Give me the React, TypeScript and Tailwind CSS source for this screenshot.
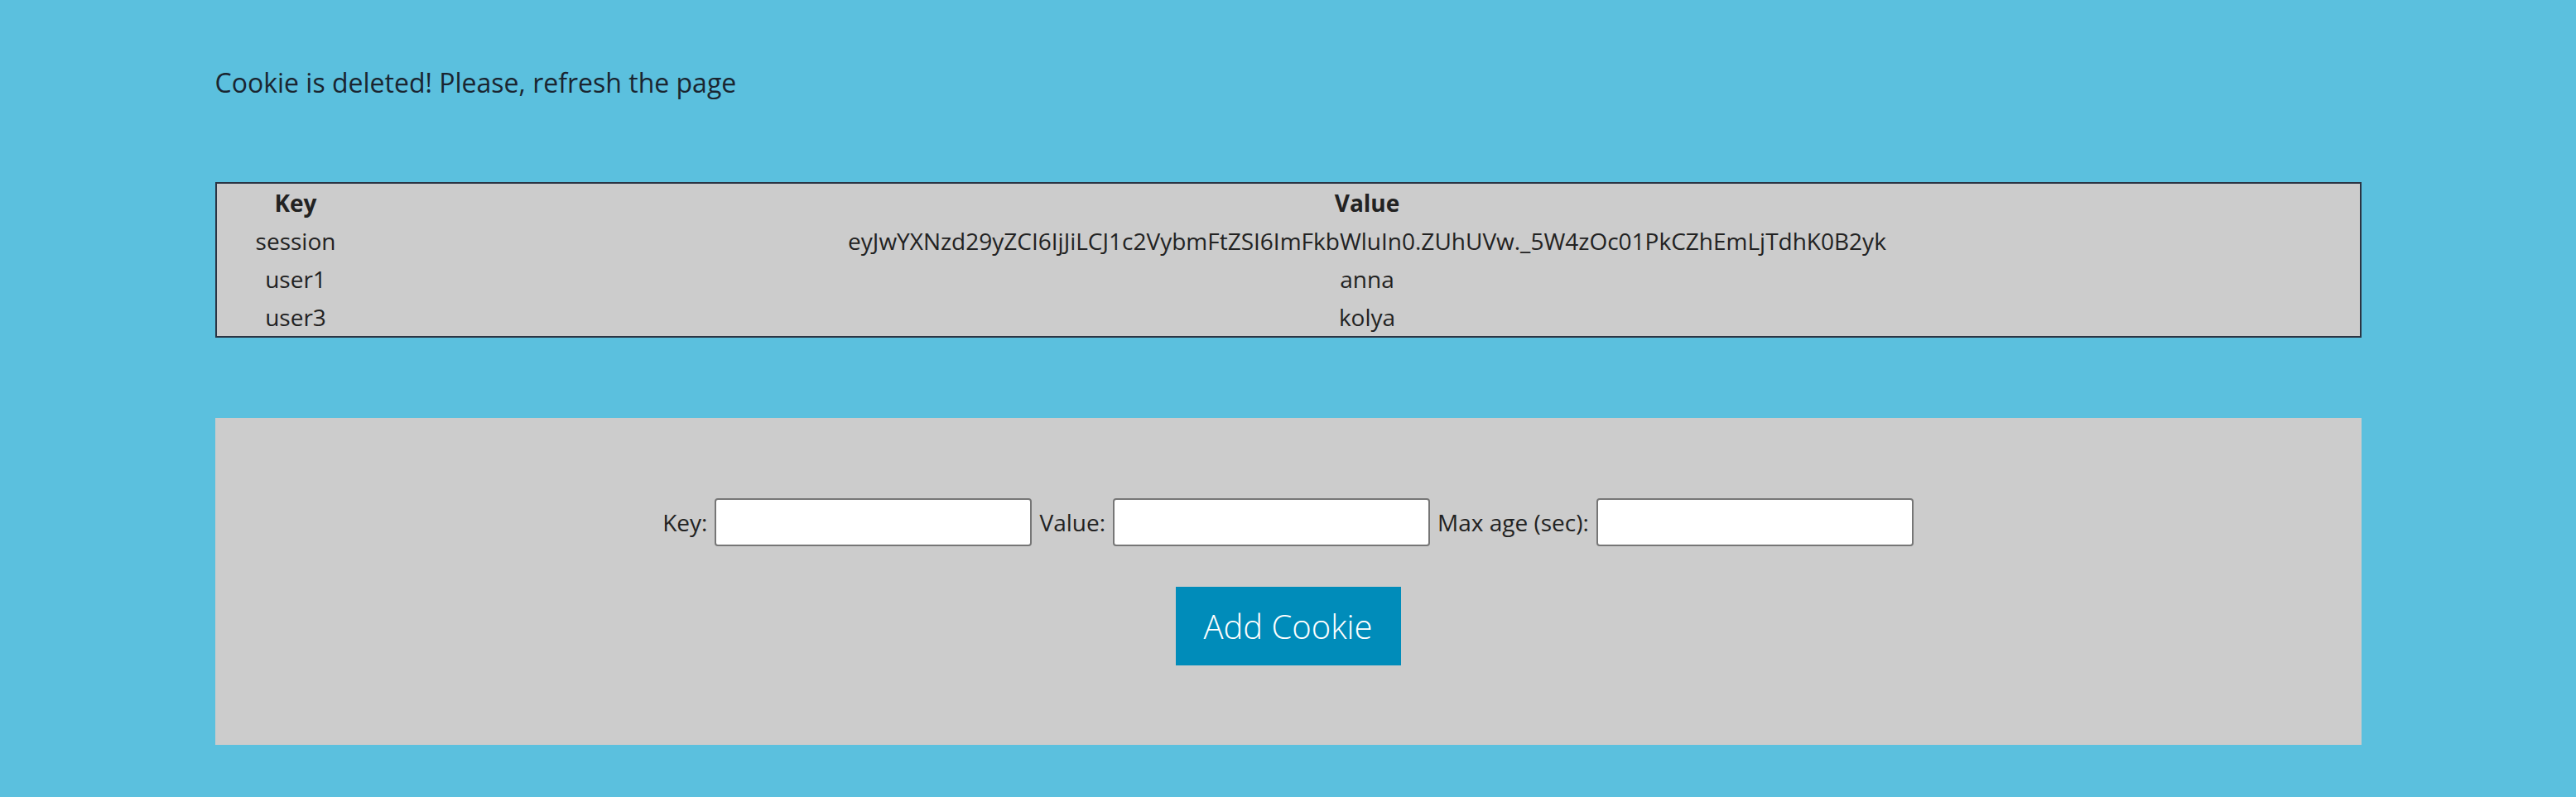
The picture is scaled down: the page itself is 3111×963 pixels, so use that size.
const rows = [
  ['session', 'eyJwYXNzd29yZCI6IjJiLCJ1c2VybmFtZSI6ImFkbWluIn0.ZUhUVw._5W4zOc01PkCZhEmLjTdhK0B2yk'],
  ['user1', 'anna'],
  ['user3', 'kolya'],
]

function Field({ label }: { label: string }) {
  return (
    <>
      <label className="text-[28px] leading-[normal] text-[#222]">{label}</label>
      <input
        type="text"
        className="h-[58px] w-[383px] rounded-[4px] border-2 border-[#767676] bg-white px-2 text-[28px] outline-none"
      />
    </>
  )
}

export default function App() {
  return (
    <div className="min-h-[963px] w-full bg-[#5bc0de] font-['Open_Sans',sans-serif]">
      <div className="mx-auto w-[2592px] pt-[78px]">
        <p className="text-[32px] leading-[normal] text-[#1a2530]">
          Cookie is deleted! Please, refresh the page
        </p>

        <table className="mt-[99px] w-full border-2 border-[#2b3544] bg-[#cccccc] text-[28px] leading-[normal] text-[#222]">
          <thead>
            <tr>
              <th className="h-[46.5px] w-[192px] text-center font-bold">Key</th>
              <th className="h-[46.5px] text-center font-bold">Value</th>
            </tr>
          </thead>
          <tbody>
            {rows.map(([k, v]) => (
              <tr key={k}>
                <td className="h-[46.5px] text-center">{k}</td>
                <td className="h-[46.5px] text-center">{v}</td>
              </tr>
            ))}
          </tbody>
        </table>

        <div className="mt-[97px] flex h-[395px] flex-col items-center bg-[#cccccc] pt-[97px]">
          <div className="flex h-[58px] items-center gap-[9px]">
            <Field label="Key:" />
            <Field label="Value:" />
            <Field label="Max age (sec):" />
          </div>
          <button className="mt-[49px] h-[95px] w-[272px] bg-[#008cba] text-[40px] font-light text-white">
            Add Cookie
          </button>
        </div>
      </div>
    </div>
  )
}
